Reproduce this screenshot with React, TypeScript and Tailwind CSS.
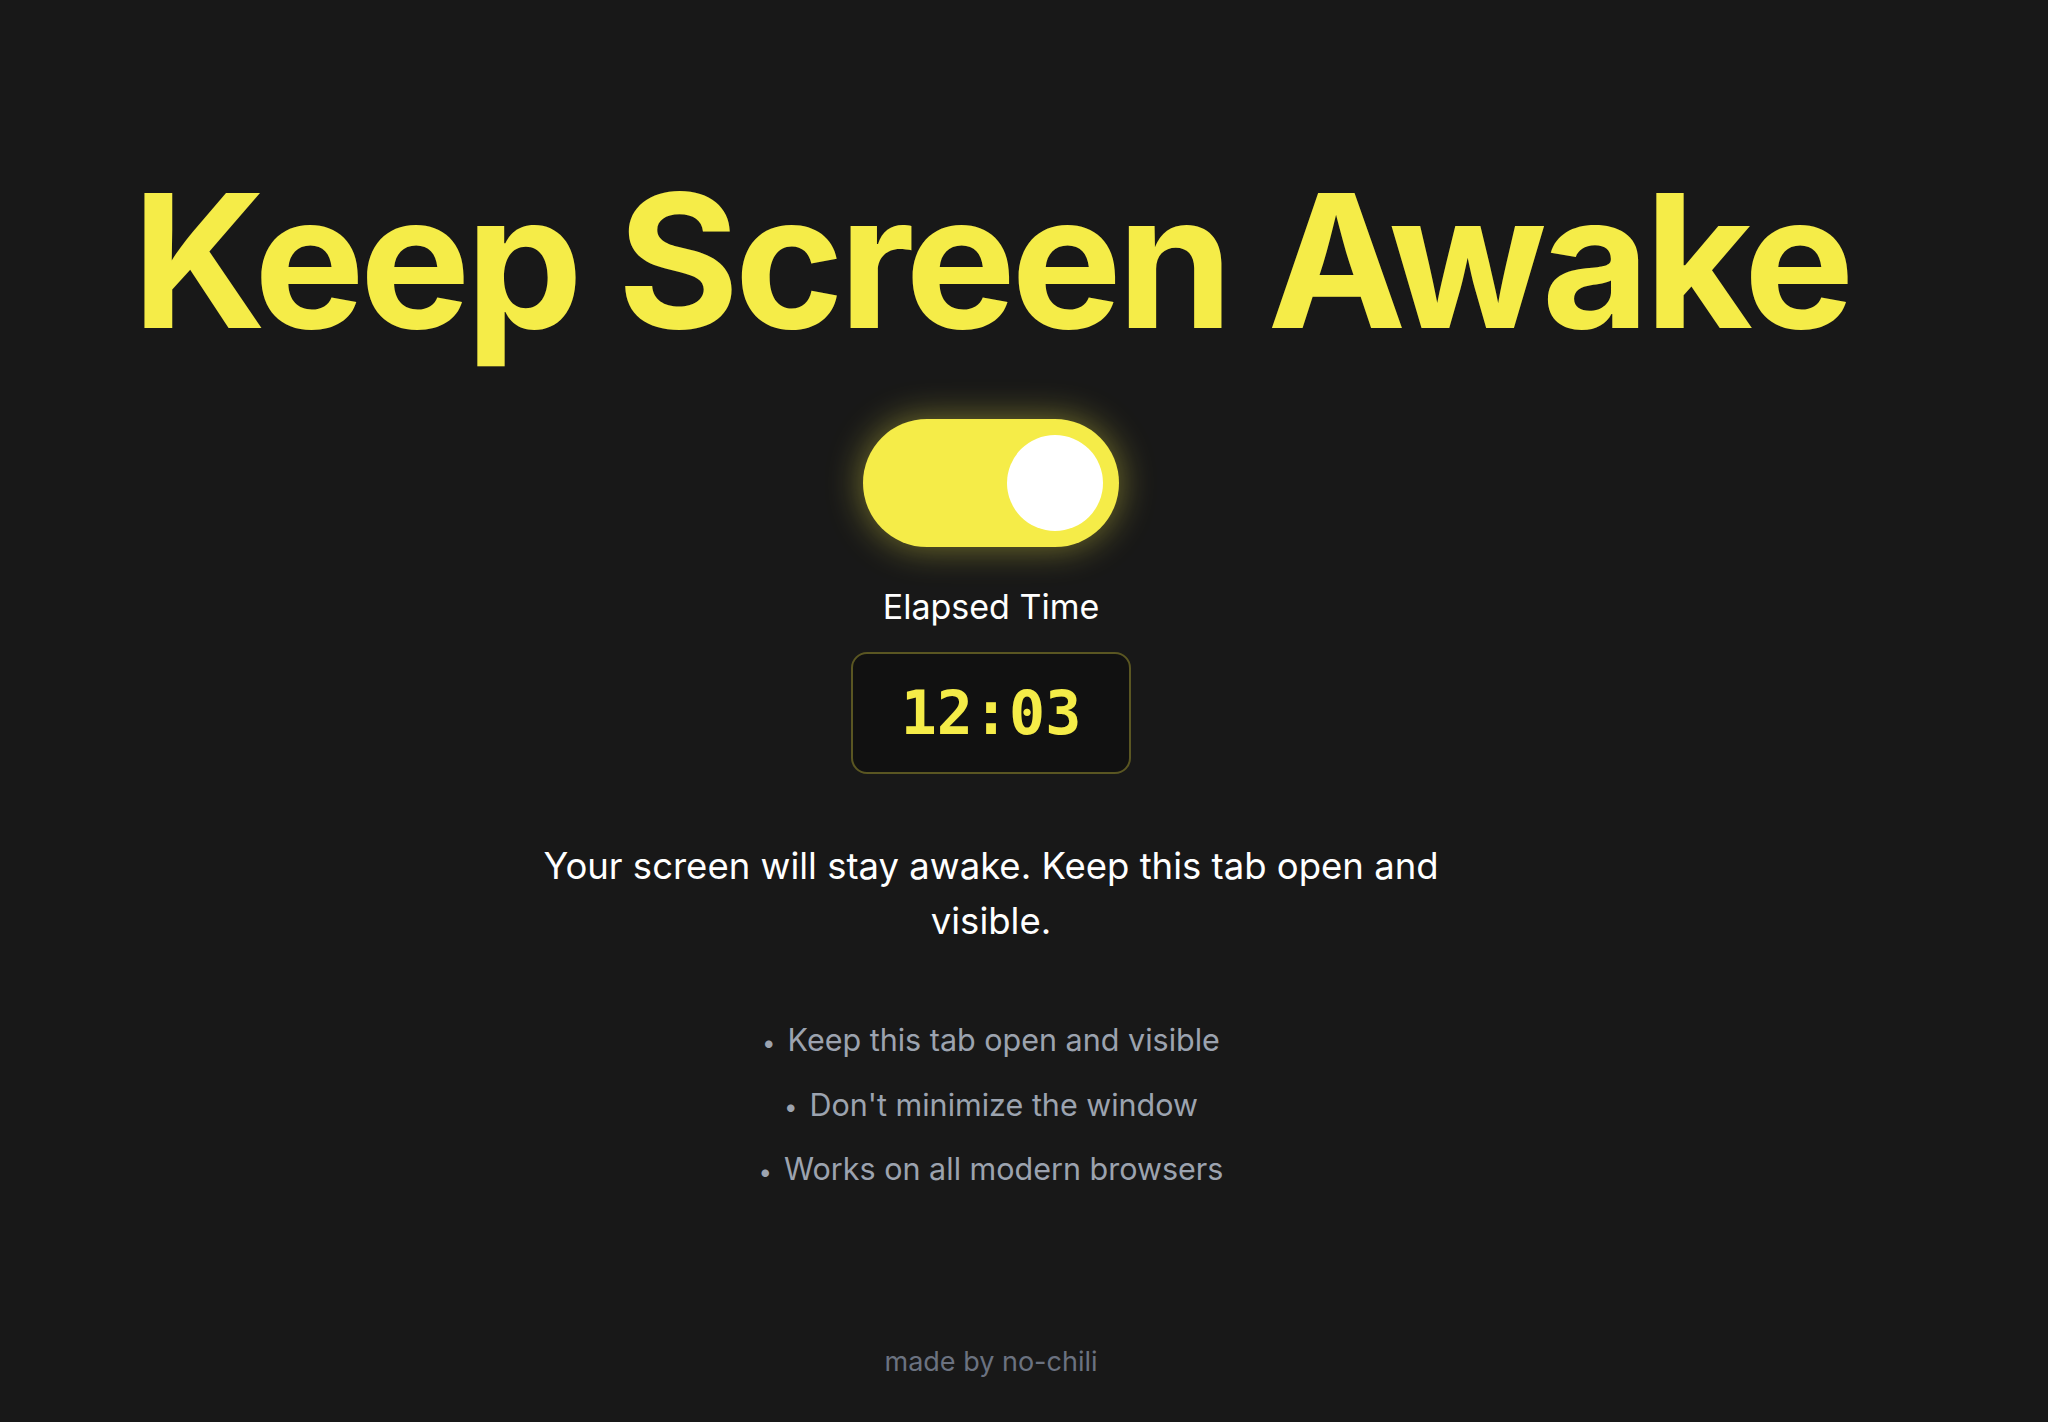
import React, { useState } from 'react';

const tips = [
  'Keep this tab open and visible',
  "Don't minimize the window",
  'Works on all modern browsers',
];

export default function App() {
  const [awake, setAwake] = useState(true);

  return (
    <div className="min-h-screen w-full bg-[#181818] pr-[66px] flex flex-col items-center font-['Inter','Noto_Sans',sans-serif] text-white">
      {/* Title */}
      <h1 className="mt-[168px] text-[186px] leading-none font-bold tracking-[-0.026em] text-[#f5ec48]">
        Keep Screen Awake
      </h1>

      {/* Toggle */}
      <button
        onClick={() => setAwake(!awake)}
        className={`mt-[65px] w-[256px] h-[128px] rounded-full p-4 flex items-center transition-all ${
          awake
            ? 'bg-[#f5ec48] justify-end shadow-[0_0_36px_rgba(245,236,72,0.45)]'
            : 'bg-[#3a3a3a] justify-start'
        }`}
      >
        <span className="block w-24 h-24 rounded-full bg-white" />
      </button>

      {/* Timer */}
      <div className="mt-8 text-[34px] leading-[56px] text-white">Elapsed Time</div>
      <div className="mt-[17px] rounded-2xl border-2 border-[#5a5622] bg-[#111111] px-12 py-6">
        <span className="block font-['DejaVu_Sans_Mono',monospace] font-bold text-[60px] leading-[70px] text-[#f5ec48]">
          12:03
        </span>
      </div>

      {/* Status */}
      <p className="mt-[65px] max-w-[910px] text-center text-[36.5px] leading-[55px] text-white">
        Your screen will stay awake. Keep this tab open and visible.
      </p>

      {/* Tips */}
      <ul className="mt-[67px] flex flex-col items-center gap-[14px] text-[30.5px] leading-[48px] text-[#9ca3af]">
        {tips.map((t) => (
          <li key={t}>
            <span className="text-[24px] align-middle mr-3">•</span>
            {t}
          </li>
        ))}
      </ul>

      {/* Footer */}
      <footer className="mt-[146px] mb-[40px] text-[27px] leading-[40px] text-[#6b7280]">made by no-chili</footer>
    </div>
  );
}
